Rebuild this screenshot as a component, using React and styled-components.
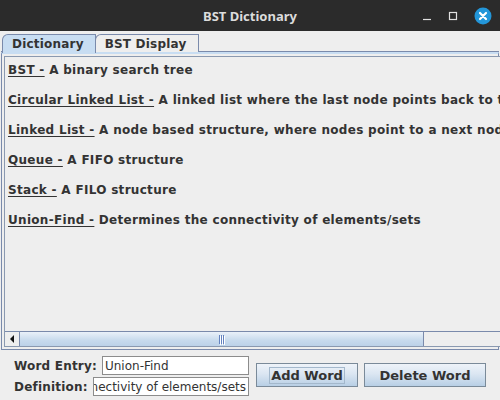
import React from "react";
import styled, { createGlobalStyle } from "styled-components";

const GlobalStyle = createGlobalStyle`
  html, body {
    margin: 0;
    padding: 0;
    background: #eeeeee;
  }
  * {
    box-sizing: border-box;
  }
`;

const Window = styled.div`
  width: 500px;
  height: 400px;
  display: flex;
  flex-direction: column;
  background: #eeeeee;
  font-family: "DejaVu Sans", sans-serif;
  overflow: hidden;
`;

const TitleBar = styled.div`
  height: 31px;
  flex: none;
  background: #2b2b2b;
  position: relative;
  display: flex;
  align-items: center;
  justify-content: center;
  color: #dcdcdc;
  font-family: "Noto Sans", sans-serif;
  font-weight: 700;
  font-size: 13px;
`;

const WindowButtons = styled.div`
  position: absolute;
  right: 8px;
  top: 0;
  height: 31px;
  display: flex;
  align-items: center;
  gap: 16px;
`;

const TabStrip = styled.div`
  display: flex;
  align-items: flex-end;
  height: 21px;
  padding-left: 2px;
`;

const Tab = styled.div`
  height: ${p => (p.$active ? "19px" : "18px")};
  padding: 0 11px 0 9px;
  display: flex;
  align-items: center;
  font-weight: 700;
  font-size: 12px;
  letter-spacing: 0.2px;
  color: #333333;
  background: ${p => (p.$active ? "#c8ddf2" : "#eeeeee")};
  border: 1px solid #7a8aab;
  border-bottom: none;
  border-top-left-radius: 6px;
  margin-right: -1px;
  margin-bottom: ${p => (p.$active ? "-1px" : "0")};
  position: relative;
  z-index: ${p => (p.$active ? 2 : 1)};
`;

const TabPanel = styled.div`
  height: 298px;
  flex: none;
  margin: 0 1px;
  border: 1px solid #7a8aab;
  border-top: 2px solid #c8ddf2;
  box-shadow: 0 -1px 0 #7a8aab;
  padding: 2px;
  display: flex;
`;

const ScrollPane = styled.div`
  flex: 1;
  border: 1px solid #8a99b0;
  display: flex;
  flex-direction: column;
  background: #eeeeee;
`;

const Viewport = styled.div`
  flex: 1;
  overflow: hidden;
  padding: 5px 0 0 3px;
`;

const Entry = styled.div`
  height: 30px;
  line-height: 16px;
  white-space: nowrap;
  font-weight: 700;
  font-size: 12px;
  letter-spacing: 0.3px;
  color: #333333;
`;

const Term = styled.span`
  text-decoration: underline;
  text-underline-offset: 2px;
`;

const HScroll = styled.div`
  height: 15px;
  flex: none;
  display: flex;
  border-top: 1px solid #7a8aab;
  background: #eeeeee;
`;

const ArrowButton = styled.div`
  width: 15px;
  flex: none;
  display: flex;
  align-items: center;
  justify-content: center;
  border-left: ${p => (p.$right ? "1px solid #7a8a99" : "none")};
  border-right: ${p => (p.$right ? "none" : "1px solid #7a8aab")};
  background: #eeeeee;
`;

const Thumb = styled.div`
  width: 404px;
  flex: none;
  background: linear-gradient(#eaf1f9, #c7daed 60%, #bcd1e8);
  border-right: 1px solid #7a8aab;
  display: flex;
  align-items: center;
  justify-content: center;
  gap: 1px;
`;

const Grip = styled.div`
  width: 1px;
  height: 9px;
  background: #6382bf;
  box-shadow: 1px 1px 0 #ffffff;
`;

const Track = styled.div`
  flex: 1;
`;

const Bottom = styled.div`
  flex: 1;
  display: flex;
  align-items: flex-start;
  padding-left: 14px;
  gap: 7px;
`;

const Form = styled.div`
  width: 235px;
  margin-top: 6px;
  display: flex;
  flex-direction: column;
  gap: 2px;
`;

const FormRow = styled.div`
  display: flex;
  align-items: center;
  gap: 5px;
`;

const Label = styled.span`
  font-weight: 700;
  font-size: 12px;
  letter-spacing: 0.2px;
  color: #333333;
  white-space: nowrap;
`;

const Field = styled.div`
  flex: 1;
  min-width: 0;
  height: 19px;
  background: #ffffff;
  border: 1px solid #8c8c8c;
  font-size: 12px;
  color: #333333;
  display: flex;
  align-items: center;
  justify-content: ${p => (p.$end ? "flex-end" : "flex-start")};
  padding: 0 2px;
  overflow: hidden;
  white-space: nowrap;
`;

const FieldText = styled.span`
  flex: none;
`;

const Buttons = styled.div`
  display: flex;
  gap: 6px;
  margin-top: 13px;
`;

const Button = styled.button`
  width: ${p => p.$w}px;
  height: 24px;
  border: 1px solid #7a8a99;
  border-radius: 0;
  background: linear-gradient(#eef3f9, #dbe6f2 45%, #b8cfe5);
  font-family: "DejaVu Sans", sans-serif;
  font-weight: 700;
  font-size: 13px;
  color: #333333;
  padding: 0;
  display: flex;
  align-items: center;
  justify-content: center;
`;

const Focus = styled.span`
  border: 1px solid ${p => (p.$on ? "#a3b8cc" : "transparent")};
  padding: 0 1px;
  line-height: 15px;
`;

const entries = [
  ["BST -", "A binary search tree"],
  ["Circular Linked List -", "A linked list where the last node points back to the first node"],
  ["Linked List -", "A node based structure, where nodes point to a next node"],
  ["Queue -", "A FIFO structure"],
  ["Stack -", "A FILO structure"],
  ["Union-Find -", "Determines the connectivity of elements/sets"],
];

export default function App() {
  return (
    <Window>
      <GlobalStyle />
      <TitleBar>
        BST Dictionary
        <WindowButtons>
          <svg width="10" height="10" viewBox="0 0 10 10">
            <path d="M1 8.5H9" stroke="#e0e0e0" strokeWidth="1.2" />
          </svg>
          <svg width="10" height="10" viewBox="0 0 10 10">
            <rect x="1.5" y="1.5" width="7" height="7" fill="none" stroke="#e0e0e0" strokeWidth="1.2" />
          </svg>
          <svg width="18" height="18" viewBox="0 0 18 18">
            <circle cx="9" cy="9" r="8.5" fill="#2396d9" />
            <path d="M6 6L12 12M12 6L6 12" stroke="#ffffff" strokeWidth="2.2" strokeLinecap="round" />
          </svg>
        </WindowButtons>
      </TitleBar>
      <TabStrip>
        <Tab $active>Dictionary</Tab>
        <Tab>BST Display</Tab>
      </TabStrip>
      <TabPanel>
        <ScrollPane>
          <Viewport>
            {entries.map(([term, def]) => (
              <Entry key={term}>
                <Term>{term}</Term> {def}
              </Entry>
            ))}
          </Viewport>
          <HScroll>
            <ArrowButton>
              <svg width="5" height="8" viewBox="0 0 5 8">
                <path d="M4 0V8L0 4Z" fill="#111111" />
              </svg>
            </ArrowButton>
            <Thumb>
              <Grip />
              <Grip />
              <Grip />
            </Thumb>
            <Track />
            <ArrowButton $right>
              <svg width="5" height="8" viewBox="0 0 5 8">
                <path d="M1 0V8L5 4Z" fill="#111111" />
              </svg>
            </ArrowButton>
          </HScroll>
        </ScrollPane>
      </TabPanel>
      <Bottom>
        <Form>
          <FormRow>
            <Label>Word Entry:</Label>
            <Field>
              <FieldText>Union-Find</FieldText>
            </Field>
          </FormRow>
          <FormRow>
            <Label>Definition:</Label>
            <Field $end>
              <FieldText>Determines the connectivity of elements/sets</FieldText>
            </Field>
          </FormRow>
        </Form>
        <Buttons>
          <Button $w={102}>
            <Focus $on>Add Word</Focus>
          </Button>
          <Button $w={122}>
            <Focus>Delete Word</Focus>
          </Button>
        </Buttons>
      </Bottom>
    </Window>
  );
}
